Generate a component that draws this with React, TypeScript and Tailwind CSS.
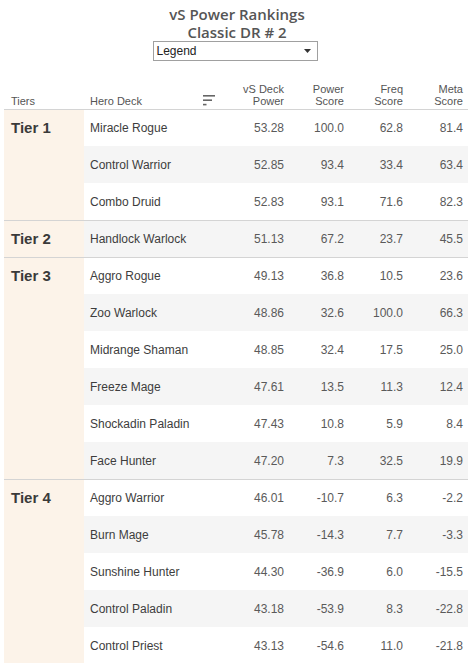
import React from "react";

type Row = { deck: string; p: string; ps: string; f: string; m: string };
type Group = { tier: string; rows: Row[] };

const groups: Group[] = [
  {
    tier: "Tier 1",
    rows: [
      { deck: "Miracle Rogue", p: "53.28", ps: "100.0", f: "62.8", m: "81.4" },
      { deck: "Control Warrior", p: "52.85", ps: "93.4", f: "33.4", m: "63.4" },
      { deck: "Combo Druid", p: "52.83", ps: "93.1", f: "71.6", m: "82.3" },
    ],
  },
  {
    tier: "Tier 2",
    rows: [{ deck: "Handlock Warlock", p: "51.13", ps: "67.2", f: "23.7", m: "45.5" }],
  },
  {
    tier: "Tier 3",
    rows: [
      { deck: "Aggro Rogue", p: "49.13", ps: "36.8", f: "10.5", m: "23.6" },
      { deck: "Zoo Warlock", p: "48.86", ps: "32.6", f: "100.0", m: "66.3" },
      { deck: "Midrange Shaman", p: "48.85", ps: "32.4", f: "17.5", m: "25.0" },
      { deck: "Freeze Mage", p: "47.61", ps: "13.5", f: "11.3", m: "12.4" },
      { deck: "Shockadin Paladin", p: "47.43", ps: "10.8", f: "5.9", m: "8.4" },
      { deck: "Face Hunter", p: "47.20", ps: "7.3", f: "32.5", m: "19.9" },
    ],
  },
  {
    tier: "Tier 4",
    rows: [
      { deck: "Aggro Warrior", p: "46.01", ps: "-10.7", f: "6.3", m: "-2.2" },
      { deck: "Burn Mage", p: "45.78", ps: "-14.3", f: "7.7", m: "-3.3" },
      { deck: "Sunshine Hunter", p: "44.30", ps: "-36.9", f: "6.0", m: "-15.5" },
      { deck: "Control Paladin", p: "43.18", ps: "-53.9", f: "8.3", m: "-22.8" },
      { deck: "Control Priest", p: "43.13", ps: "-54.6", f: "11.0", m: "-21.8" },
    ],
  },
];

export default function App() {
  let idx = 0;
  return (
    <div className="w-[474px] h-[663px] overflow-hidden bg-white font-['Liberation_Sans',Arial,sans-serif]">
      <div className="pt-[5px] flex flex-col items-center text-[#555555] font-['Open_Sans',sans-serif] font-semibold text-[15px] leading-[18px]">
        <div>vS Power Rankings</div>
        <div>Classic DR # 2</div>
      </div>
      <div className="flex justify-center">
        <div className="ml-[-4px] w-[165px] h-[20px] border border-[#a0a0a0] flex items-center justify-between pl-[3px] pr-[6px] text-[12px] text-[#222]">
          <span>Legend</span>
          <svg width="7" height="4" viewBox="0 0 7 4">
            <path d="M0 0 L7 0 L3.5 4 Z" fill="#333" />
          </svg>
        </div>
      </div>
      <div className="mx-[4px] w-[464px]">
        <div className="grid grid-cols-[80px_145px_60px_60px_59px_60px] h-[49px] items-end border-b border-[#d4d4d4] pb-[2px] text-[11px] leading-[12px] text-[#555]">
          <div className="pl-[7px]">Tiers</div>
          <div className="pl-[6px] flex items-end justify-between pr-[14px]">
            <span>Hero Deck</span>
            <svg width="12" height="11" viewBox="0 0 12 11" className="mb-[1px]">
              <rect x="0" y="0" width="12" height="1.6" fill="#666" />
              <rect x="0" y="4.4" width="9" height="1.6" fill="#666" />
              <rect x="0" y="8.8" width="3.5" height="1.6" fill="#666" />
            </svg>
          </div>
          <div className="text-right pr-[5px]">vS Deck<br />Power</div>
          <div className="text-right pr-[5px]">Power<br />Score</div>
          <div className="text-right pr-[5px]">Freq<br />Score</div>
          <div className="text-right pr-[5px]">Meta<br />Score</div>
        </div>
        {groups.map((g) => (
          <div key={g.tier} className="flex border-b border-[#d4d4d4]">
            <div className="w-[80px] shrink-0 bg-[#fcf3e9] pl-[7px] pt-[8px] text-[15px] leading-[20px] font-bold text-[#3a3a3a]">
              {g.tier}
            </div>
            <div className="flex-1 flex flex-col">
              {g.rows.map((r, i) => {
                const striped = idx % 2 === 1;
                idx++;
                return (
                  <div
                    key={r.deck}
                    className={
                      "grid grid-cols-[145px_60px_60px_59px_60px] items-center text-[12px] " +
                      (i === 0 ? "h-[36px] " : "h-[37px] ") +
                      (striped ? "bg-[#f5f5f5]" : "bg-white")
                    }
                  >
                    <div className="pl-[6px] text-[#3d3d3d]">{r.deck}</div>
                    <div className="text-right pr-[5px] text-[#5a5a5a]">{r.p}</div>
                    <div className="text-right pr-[5px] text-[#5a5a5a]">{r.ps}</div>
                    <div className="text-right pr-[5px] text-[#5a5a5a]">{r.f}</div>
                    <div className="text-right pr-[5px] text-[#5a5a5a]">{r.m}</div>
                  </div>
                );
              })}
            </div>
          </div>
        ))}
      </div>
    </div>
  );
}
